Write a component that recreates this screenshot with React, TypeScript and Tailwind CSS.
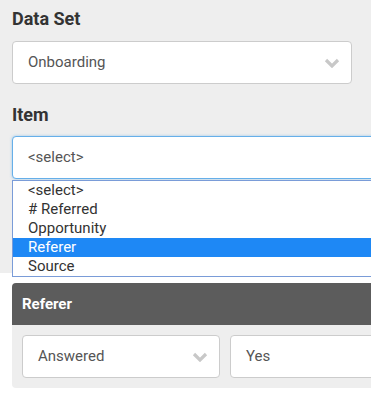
const Chevron = () => (
  <svg width="16" height="10" viewBox="0 0 16 10" className="shrink-0">
    <path d="M2 2 L8 8 L14 2" fill="none" stroke="#c8c8c8" strokeWidth="3.2" strokeLinecap="butt" />
  </svg>
)

type SelectBoxProps = {
  value: string
  className?: string
  chevron?: boolean
}

const SelectBox = (props: SelectBoxProps) => (
  <div
    className={`flex items-center justify-between h-[43px] bg-white border border-[#cccccc] rounded-[4px] pl-[15px] pr-[11px] text-[15px] text-[#555555] ${props.className ?? ''}`}
  >
    <span>{props.value}</span>
    {props.chevron && <Chevron />}
  </div>
)

const options = ['<select>', '# Referred', 'Opportunity', 'Referer', 'Source']

export default function App() {
  return (
    <div className="w-[371px] h-[393px] overflow-hidden bg-white font-['Roboto',sans-serif]">
      <div className="relative h-[273px] bg-[#eeeeee] pl-3 pt-[7px]">
        <div className="text-[18px] leading-[24px] font-bold text-[#333333]">Data Set</div>
        <SelectBox value="Onboarding" chevron className="mt-[10px] w-[340px]" />
        <div className="mt-[19px] text-[18px] leading-[24px] font-bold text-[#333333]">Item</div>
        <div className="mt-[9px] flex items-center h-[43px] w-[380px] bg-white border border-[#66afe9] rounded-[4px] pl-[15px] text-[15px] text-[#555555] shadow-[0_0_3px_rgba(102,175,233,0.6)]">
          &lt;select&gt;
        </div>
        <ul className="absolute left-3 top-[180px] w-[380px] bg-white border border-[#7a9cd8] z-10">
          {options.map((o) => (
            <li
              key={o}
              className={`h-[19px] pl-[15px] text-[15px] leading-[19px] ${o === 'Referer' ? 'bg-[#1e88f5] text-white' : 'text-[#333333]'}`}
            >
              {o}
            </li>
          ))}
        </ul>
      </div>
      <section className="ml-3 mt-[10px] w-[380px] rounded-[4px] overflow-hidden">
        <div className="h-[42px] bg-[#5c5c5c] flex items-center pl-[10px] text-[15px] font-bold text-white">
          Referer
        </div>
        <div className="bg-[#eeeeee] flex gap-[10px] pl-[10px] pt-[10px] pb-[10px]">
          <SelectBox value="Answered" chevron className="w-[198px]" />
          <SelectBox value="Yes" className="w-[160px]" />
        </div>
      </section>
    </div>
  )
}
